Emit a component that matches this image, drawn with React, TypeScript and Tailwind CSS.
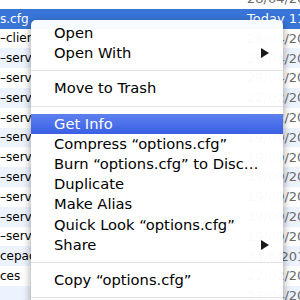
import React from "react";

type Row = { name: string; date: string };

const rows: Row[] = [
  { name: "", date: "28/04/2010" },
  { name: "s.cfg", date: "Today 11:52" },
  { name: "–client.cfg", date: "28/04/2010" },
  { name: "–server.cfg", date: "28/04/2010" },
  { name: "–server.cfg", date: "28/04/2010" },
  { name: "–server.cfg", date: "22/02/2010" },
  { name: "–server.cfg", date: "22/02/2010" },
  { name: "–server.cfg", date: "19/09/2009" },
  { name: "–server.cfg", date: "19/09/2009" },
  { name: "–server.cfg", date: "19/09/2009" },
  { name: "–server.cfg", date: "19/09/2009" },
  { name: "–server.cfg", date: "19/09/2009" },
  { name: "–server.cfg", date: "19/09/2009" },
  { name: "cepack", date: "14/6/2010" },
  { name: "ces", date: "22/02/2010" },
  { name: "", date: "28/04/2010" },
];

type Item = { label?: string; sub?: boolean; sep?: boolean; active?: boolean };

const items: Item[] = [
  { label: "Open" },
  { label: "Open With", sub: true },
  { sep: true },
  { label: "Move to Trash" },
  { sep: true },
  { label: "Get Info", active: true },
  { label: "Compress “options.cfg”" },
  { label: "Burn “options.cfg” to Disc…" },
  { label: "Duplicate" },
  { label: "Make Alias" },
  { label: "Quick Look “options.cfg”" },
  { label: "Share", sub: true },
  { sep: true },
  { label: "Copy “options.cfg”" },
  { sep: true },
];

function Arrow({ white }: { white?: boolean }) {
  return (
    <svg width="8" height="10" viewBox="0 0 8 10" className="absolute right-[14px]">
      <path d="M0 0 L8 5 L0 10 Z" fill={white ? "#fff" : "#1a1a1a"} />
    </svg>
  );
}

export default function App() {
  return (
    <div className="relative w-[300px] h-[300px] overflow-hidden bg-white font-['DejaVu_Sans',sans-serif]">
      {/* Finder list behind the menu */}
      <div className="flex flex-col -mt-[11px]">
        {rows.map((r, i) => {
          const selected = i === 1;
          const stripe = i % 2 === 1 ? "bg-[#edf3fe]" : "bg-white";
          return (
            <div
              key={i}
              className={`flex items-center h-[19.8px] text-[12px] whitespace-nowrap overflow-hidden ${
                selected ? "bg-[#3875d7] text-white" : stripe + " text-black"
              }`}
            >
              <span className="w-[31px] shrink-0 overflow-hidden">{r.name}</span>
              <span className="w-[216px] shrink-0" />
              <span className={`shrink-0 text-[13px] ${selected ? "text-white" : "text-[#6b6b6b]"}`}>
                {r.date}
              </span>
            </div>
          );
        })}
      </div>

      {/* Context menu */}
      <div className="absolute left-[31px] top-[20px] w-[252px] pt-[3px] pb-[6px] rounded-[5px] bg-white/[0.97] shadow-[0_3px_9px_rgba(0,0,0,0.4)] text-[14.7px] text-black">
        {items.map((it, i) =>
          it.sep ? (
            <div key={i} className="h-[15px] flex items-center">
              <div className="h-px w-full bg-[#e3e3e3]" />
            </div>
          ) : (
            <div
              key={i}
              className={`relative h-[20.2px] flex items-center pl-[23px] whitespace-nowrap ${
                it.active ? "bg-gradient-to-b from-[#5d80ef] to-[#3a5fe5] text-white" : ""
              }`}
            >
              {it.label}
              {it.sub && <Arrow white={it.active} />}
            </div>
          )
        )}
      </div>
    </div>
  );
}
